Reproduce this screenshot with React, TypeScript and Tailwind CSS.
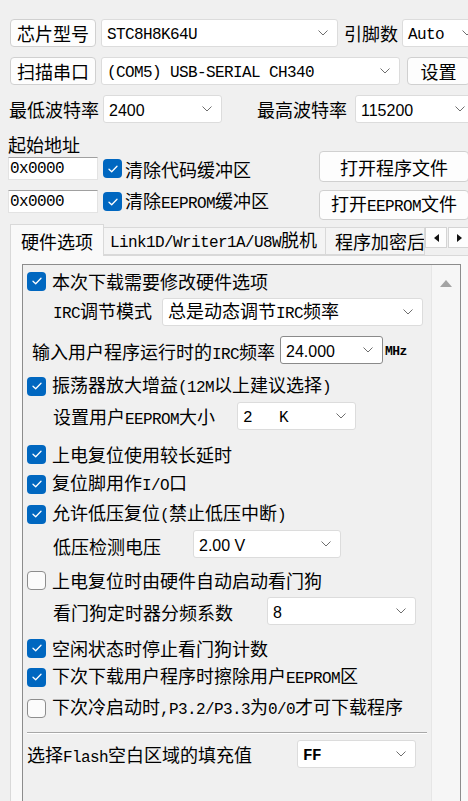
import React from "react";

const MONO = "font-['Liberation_Mono',monospace] text-[16px] tracking-[-0.6px]";

function T({ s }: { s: string }) {
  const parts = s.split(/([\x20-\x7E]+)/).filter((p) => p.length > 0);
  return (
    <span className="whitespace-pre">
      {parts.map((p, i) =>
        /[\x20-\x7E]/.test(p) ? (
          <span key={i} className="font-['Liberation_Mono',monospace] text-[16px] tracking-[-0.6px] whitespace-pre">
            {p}
          </span>
        ) : (
          <span key={i}>{p}</span>
        )
      )}
    </span>
  );
}

function Chevron() {
  return (
    <svg width="10" height="6" viewBox="0 0 10 6" className="shrink-0">
      <path d="M0.5 0.5 L5 5 L9.5 0.5" stroke="#6e6e6e" strokeWidth="1" fill="none" />
    </svg>
  );
}

function Combo({
  className,
  children,
  dark,
}: {
  className: string;
  children: React.ReactNode;
  dark?: boolean;
}) {
  return (
    <div
      className={
        "shrink-0 flex items-center justify-between bg-white border rounded-[3px] pl-[5px] pr-[9px] " +
        (dark ? "border-[#8a8a8a] " : "border-[#dcdcdc] ") +
        className
      }
    >
      <span className="whitespace-pre leading-[22px]">{children}</span>
      <Chevron />
    </div>
  );
}

function Btn({ className, children }: { className: string; children: React.ReactNode }) {
  return (
    <div
      className={
        "shrink-0 flex items-center justify-center bg-[#fdfdfd] border border-[#d0d0d0] rounded-[4px] " +
        className
      }
    >
      <span className="whitespace-pre">{children}</span>
    </div>
  );
}

function CB({ checked }: { checked: boolean }) {
  return checked ? (
    <div className="w-[19px] h-[19px] rounded-[4px] bg-[#0067c0] flex items-center justify-center shrink-0">
      <svg width="10" height="8" viewBox="0 0 10 8">
        <path
          d="M1 4.2 L3.7 6.7 L9 1.3"
          stroke="white"
          strokeWidth="1.3"
          fill="none"
          strokeLinecap="round"
          strokeLinejoin="round"
        />
      </svg>
    </div>
  ) : (
    <div className="w-[19px] h-[19px] rounded-[4px] bg-[#fbfbfb] border border-[#8d8d8d] shrink-0" />
  );
}

function CheckRow({ className, checked, text }: { className: string; checked: boolean; text: string }) {
  return (
    <div className={"flex items-center h-[28px] pl-[4px] shrink-0 whitespace-nowrap " + className}>
      <CB checked={checked} />
      <span className="ml-[6px]">
        <T s={text} />
      </span>
    </div>
  );
}

function Sans({ children }: { children: React.ReactNode }) {
  return <span className="font-['Liberation_Sans',Arial,sans-serif] text-[16px]">{children}</span>;
}

export default function App() {
  return (
    <div className="w-[468px] h-[801px] overflow-hidden bg-[#f0f0f0] text-black font-['Noto_Sans_CJK_SC',sans-serif] text-[18px] leading-[20px] flex flex-col">
      {/* Row 1 */}
      <div className="flex items-center h-[28px] mt-[19px] pl-[10px] shrink-0">
        <Btn className="w-[86px] h-[28px]">芯片型号</Btn>
        <Combo className="ml-[5px] w-[237px] h-[28px]">
          <T s="STC8H8K64U" />
        </Combo>
        <span className="ml-[6px] w-[54px] shrink-0">引脚数</span>
        <Combo className="ml-[4px] w-[80px] h-[28px]">
          <T s="Auto" />
        </Combo>
      </div>
      {/* Row 2 */}
      <div className="flex items-center h-[28px] mt-[10px] pl-[10px] shrink-0">
        <Btn className="w-[86px] h-[28px]">扫描串口</Btn>
        <Combo className="ml-[5px] w-[299px] h-[28px]">
          <T s="(COM5) USB-SERIAL CH340" />
        </Combo>
        <Btn className="ml-[7px] w-[63px] h-[28px]">设置</Btn>
      </div>
      {/* Row 3 */}
      <div className="flex items-center h-[28px] mt-[10px] pl-[9px] shrink-0">
        <span className="w-[90px] shrink-0">最低波特率</span>
        <Combo className="ml-[4px] w-[119px] h-[28px]">
          <Sans>2400</Sans>
        </Combo>
        <span className="ml-[35px] w-[90px] shrink-0">最高波特率</span>
        <Combo className="ml-[8px] w-[120px] h-[28px]">
          <Sans>115200</Sans>
        </Combo>
      </div>
      {/* Address block */}
      <div className="flex items-start mt-[12px] shrink-0">
        <div className="ml-[8px] w-[311px] shrink-0 flex flex-col">
          <div className="h-[18px] leading-[18px]">起始地址</div>
          <div className="flex items-center mt-[4px] h-[23px]">
            <div className={"w-[90px] h-[23px] bg-white border border-[#e3e3e3] border-t-[#a0a0a0] flex items-center pl-[1px] " + MONO}>
              0x0000
            </div>
            <div className="ml-[5px]">
              <CB checked />
            </div>
            <span className="ml-[3px] whitespace-nowrap">
              <T s="清除代码缓冲区" />
            </span>
          </div>
          <div className="flex items-center mt-[10px] h-[23px]">
            <div className={"w-[90px] h-[23px] bg-white border border-[#e3e3e3] border-t-[#a0a0a0] flex items-center pl-[1px] " + MONO}>
              0x0000
            </div>
            <div className="ml-[5px]">
              <CB checked />
            </div>
            <span className="ml-[3px] whitespace-nowrap">
              <T s="清除EEPROM缓冲区" />
            </span>
          </div>
        </div>
        <div className="flex flex-col mt-[16px] shrink-0">
          <Btn className="w-[150px] h-[31px]">打开程序文件</Btn>
          <Btn className="w-[150px] h-[30px] mt-[8px]">
            <T s="打开EEPROM文件" />
          </Btn>
        </div>
      </div>
      {/* Tabs */}
      <div className="flex items-end h-[31px] mt-[4px] pl-[10px] shrink-0 relative z-10">
        <div className="w-[94px] h-[32px] -mb-px bg-[#f9f9f9] border border-b-0 border-[#d9d9d9] flex items-center justify-center shrink-0">
          硬件选项
        </div>
        <div className="w-[222px] h-[28px] bg-[#f4f4f4] border border-l-0 border-[#d9d9d9] flex items-center pl-[6px] shrink-0 whitespace-nowrap">
          <T s="Link1D/Writer1A/U8W脱机" />
        </div>
        <div className="w-[99px] h-[28px] bg-[#f4f4f4] border border-l-0 border-[#d9d9d9] flex items-center pl-[9px] shrink-0 whitespace-nowrap overflow-hidden">
          程序加密后
        </div>
        <div className="self-start mt-[3px] flex shrink-0">
          <div className="w-[22px] h-[21px] bg-[#fdfdfd] border border-[#d4d4d4] flex items-center justify-center">
            <svg width="5" height="8" viewBox="0 0 5 8">
              <polygon points="5,0 0,4 5,8" fill="#111" />
            </svg>
          </div>
          <div className="ml-[1px] w-[22px] h-[21px] bg-[#fdfdfd] border border-[#d4d4d4] flex items-center justify-center">
            <svg width="5" height="8" viewBox="0 0 5 8">
              <polygon points="0,0 5,4 0,8" fill="#111" />
            </svg>
          </div>
        </div>
      </div>
      {/* Tab page */}
      <div className="flex-1 min-h-0 ml-[10px] bg-[#f9f9f9] border-l border-t border-[#d9d9d9] pt-[8px] pl-[11px] pr-[7px] flex flex-col">
        <div className="flex-1 flex border-l border-t border-r border-[#8c8c8c] bg-[#f0f0f0]">
          <div className="flex-1 flex flex-col min-w-0">
            <CheckRow className="mt-[2px]" checked text="本次下载需要修改硬件选项" />
            <div className="flex items-center h-[28px] mt-[3px] pl-[30px] shrink-0">
              <span className="w-[109px] shrink-0 whitespace-nowrap">
                <T s="IRC调节模式" />
              </span>
              <Combo className="w-[261px] h-[28px]">
                <T s="总是动态调节IRC频率" />
              </Combo>
            </div>
            <div className="flex items-center h-[28px] mt-[10px] pl-[9px] shrink-0">
              <span className="w-[248px] shrink-0 whitespace-nowrap pt-[6px]">
                <T s="输入用户程序运行时的IRC频率" />
              </span>
              <Combo dark className="w-[103px] h-[28px]">
                <Sans>24.000</Sans>
              </Combo>
              <span className="ml-[2px] pt-[4px] font-['Liberation_Mono',monospace] text-[13px] font-bold tracking-[-0.5px]">MHz</span>
            </div>
            <CheckRow className="mt-[8px]" checked text="振荡器放大增益(12M以上建议选择)" />
            <div className="flex items-center h-[28px] mt-[2px] pl-[30px] shrink-0">
              <span className="w-[184px] shrink-0 whitespace-nowrap pt-[4px]">
                <T s="设置用户EEPROM大小" />
              </span>
              <Combo className="w-[119px] h-[28px]">
                <span className={MONO}>{"2   K"}</span>
              </Combo>
            </div>
            <CheckRow className="mt-[10px]" checked text="上电复位使用较长延时" />
            <CheckRow className="mt-[2px]" checked text="复位脚用作I/O口" />
            <CheckRow className="mt-[2px]" checked text="允许低压复位(禁止低压中断)" />
            <div className="flex items-center h-[28px] mt-[2px] pl-[30px] shrink-0">
              <span className="w-[140px] shrink-0 whitespace-nowrap pt-[4px]">低压检测电压</span>
              <Combo className="w-[148px] h-[28px]">
                <Sans>2.00 V</Sans>
              </Combo>
            </div>
            <CheckRow className="mt-[8px]" checked={false} text="上电复位时由硬件自动启动看门狗" />
            <div className="flex items-center h-[28px] mt-[3px] pl-[30px] shrink-0">
              <span className="w-[214px] shrink-0 whitespace-nowrap pt-[2px]">看门狗定时器分频系数</span>
              <Combo className="w-[149px] h-[28px]">
                <Sans>8</Sans>
              </Combo>
            </div>
            <CheckRow className="mt-[9px]" checked text="空闲状态时停止看门狗计数" />
            <CheckRow className="mt-[1px]" checked text="下次下载用户程序时擦除用户EEPROM区" />
            <CheckRow className="mt-[3px]" checked={false} text="下次冷启动时,P3.2/P3.3为0/0才可下载程序" />
            <div className="ml-[4px] w-[400px] mt-[10px] border-t border-[#a8a8a8] border-b border-b-white shrink-0" />
            <div className="flex items-center h-[28px] mt-[6px] pl-[4px] shrink-0">
              <span className="w-[270px] shrink-0 whitespace-nowrap pt-[4px]">
                <T s="选择Flash空白区域的填充值" />
              </span>
              <Combo className="w-[119px] h-[28px]">
                <span className={MONO + " font-bold"}>FF</span>
              </Combo>
            </div>
          </div>
          <div className="w-[29px] shrink-0 bg-[#f6f6f6] border-l border-[#e6e6e6] flex justify-center">
            <svg width="12" height="7" viewBox="0 0 12 7" className="mt-[15px]">
              <polygon points="6,0 12,7 0,7" fill="#a3a3a3" />
            </svg>
          </div>
        </div>
      </div>
    </div>
  );
}
